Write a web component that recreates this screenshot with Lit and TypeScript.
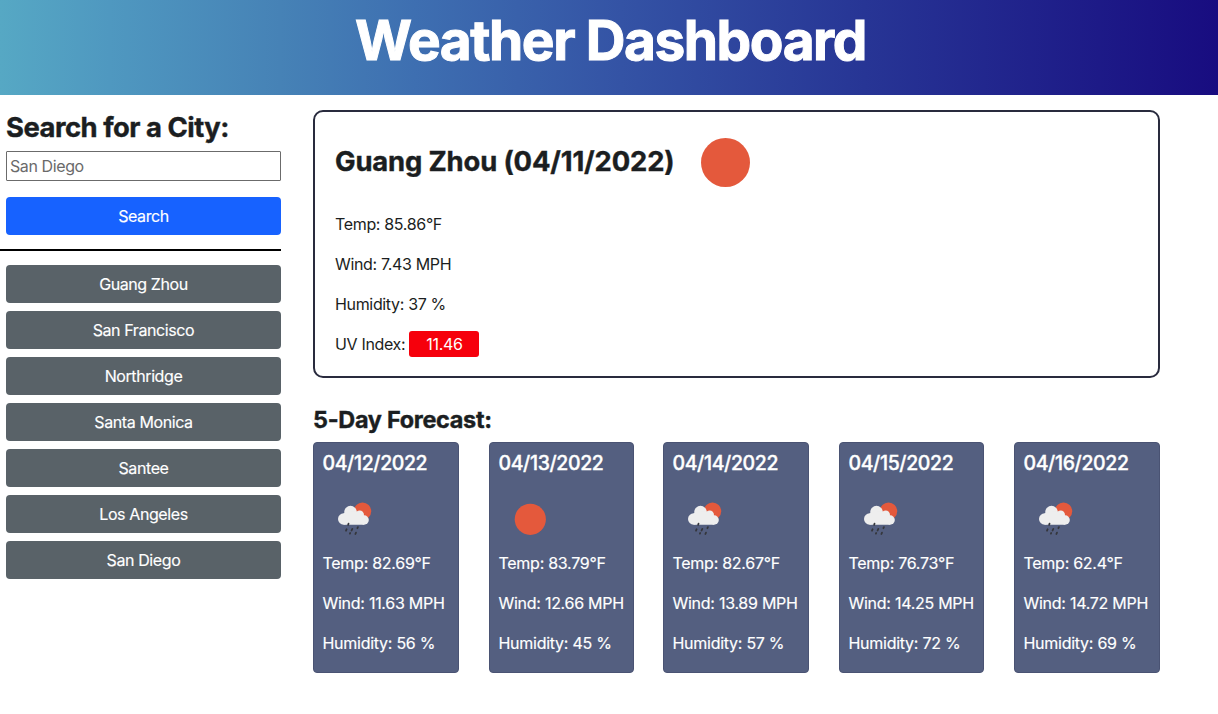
import { LitElement, html, css, svg } from "lit";
import { customElement } from "lit/decorators.js";

type Sky = "clear" | "rain";
interface Day { date: string; sky: Sky; temp: string; wind: string; humidity: string; }

const CITIES = ["Guang Zhou", "San Francisco", "Northridge", "Santa Monica", "Santee", "Los Angeles", "San Diego"];

const DAYS: Day[] = [
  { date: "04/12/2022", sky: "rain", temp: "82.69", wind: "11.63", humidity: "56" },
  { date: "04/13/2022", sky: "clear", temp: "83.79", wind: "12.66", humidity: "45" },
  { date: "04/14/2022", sky: "rain", temp: "82.67", wind: "13.89", humidity: "57" },
  { date: "04/15/2022", sky: "rain", temp: "76.73", wind: "14.25", humidity: "72" },
  { date: "04/16/2022", sky: "rain", temp: "62.4", wind: "14.72", humidity: "69" },
];

const clearSky = svg`<circle cx="31.3" cy="33.3" r="15.6" fill="#e4593c"/>`;
const rainSky = svg`
  <circle cx="39.5" cy="25.2" r="8.7" fill="#e4593c"/>
  <g fill="#eeeeee">
    <circle cx="20.7" cy="33" r="5.7"/>
    <circle cx="27.5" cy="26.1" r="6.3"/>
    <circle cx="36.7" cy="28.9" r="4.3"/>
    <circle cx="41.1" cy="34" r="4.7"/>
    <path d="M20.7 27.3 L28 25 L37 26 L41 30 L41.1 38.7 L20.7 38.7 Z"/>
  </g>
  <g stroke="#35373c" stroke-width="1.8" stroke-linecap="round">
    <path d="M25.5 37.6 L25.2 38.9 M23.6 43.3 L23 44.7 M29.3 42.9 L28.6 44.5 M34.9 41.1 L34.4 42.2 M27.2 47 L26.9 47.6 M33 46.6 L32.4 48"/>
  </g>`;

@customElement("app-root")
export class AppRoot extends LitElement {
  static styles = css`
    :host {
      display: block;
      min-height: 714px;
      background: #fff;
      color: #1b1e21;
      font-family: Inter, "Liberation Sans", sans-serif;
      font-size: 16px;
      line-height: 24px;
      letter-spacing: -0.4px;
    }
    * { box-sizing: border-box; }
    h1, h2, h3, h4, p { margin: 0; padding: 0; }
    .banner {
      height: 95px;
      padding-top: 7px;
      background: linear-gradient(to right, #56a8c4, #4f98c0 9%, #4682b6 23%, #3e6fb1 34%, #3453a5 51%, #273595 71%, #180c80);
      color: #fff;
      text-align: center;
    }
    .title { font-size: 55px; line-height: 67px; font-weight: 700; letter-spacing: -1.45px; padding-left: 3px; -webkit-text-stroke: 1px; }
    .layout { display: flex; align-items: flex-start; }
    .side { width: 281px; padding-top: 15px; }
    .search { display: flex; flex-direction: column; padding: 0 0 14px 6px; border-bottom: 2px solid #000; }
    .search-title { font-size: 27.4px; line-height: 34px; font-weight: 700; letter-spacing: -0.48px; margin-bottom: 7px; white-space: nowrap; -webkit-text-stroke: 0.4px; }
    .field {
      height: 30px; padding: 1px 3px; border: 1px solid #6b6b6b; border-radius: 1px;
      font: inherit; letter-spacing: inherit; background: #fff;
    }
    .field::placeholder { color: #6a6a6a; opacity: 1; }
    .btn {
      height: 38px; border: 0; border-radius: 4px; padding: 0; color: #fff;
      font: inherit; letter-spacing: inherit; -webkit-text-stroke: 0.15px;
    }
    .primary { background: #1762ff; margin-top: 16px; }
    .cities { display: flex; flex-direction: column; gap: 8px; padding: 14px 0 0 6px; }
    .city { background: #596268; }
    .main { width: 847px; margin: 15px 0 0 32px; }
    .today { height: 268px; border: 2px solid #292b3e; border-radius: 10px; padding: 0 20px; }
    .today .stat { letter-spacing: -0.34px; }
    .today-head { display: flex; align-items: center; height: 100px; }
    .today-title { font-size: 27.4px; font-weight: 700; letter-spacing: -0.14px; line-height: 34px; white-space: nowrap; padding-bottom: 2px; width: 339px; -webkit-text-stroke: 0.4px; }
    .sun { width: 49px; height: 49px; margin-left: 27px; }
    .stat { margin-bottom: 16px; white-space: nowrap; }
    .uv { display: inline-block; vertical-align: top; margin-top: -1px; width: 70px; height: 26px; line-height: 26px; border-radius: 3px; background: #f6000c; color: #fff; text-align: center; }
    .forecast-title { font-size: 23.4px; line-height: 29px; font-weight: 700; letter-spacing: -0.28px; margin: 27px 0 8px; -webkit-text-stroke: 0.4px; }
    .days { display: grid; grid-template-columns: 176px 174px 176px 175px 146px; }
    .day { width: 146px; height: 231px; border: 1px solid #4a5373; border-radius: 4px; background: #545f80; color: #fff; padding: 8px 8.5px; letter-spacing: -0.27px; -webkit-text-stroke: 0.15px; }
    .day:nth-child(even) { width: 145px; }
    .date { font-size: 19.5px; line-height: 24px; font-weight: 500; letter-spacing: -0.38px; -webkit-text-stroke: 0.35px; }
    .sky { display: block; width: 64px; height: 64px; margin: 11px 0 1px; }
  `;

  private stats(temp: string, wind: string, humidity: string) {
    return html`
      <p class="stat">Temp: ${temp}°F</p>
      <p class="stat">Wind: ${wind} MPH</p>
      <p class="stat">Humidity: ${humidity} %</p>`;
  }

  render() {
    return html`
      <header class="banner"><h1 class="title">Weather Dashboard</h1></header>
      <div class="layout">
        <aside class="side">
          <div class="search">
            <h2 class="search-title">Search for a City:</h2>
            <input class="field" placeholder="San Diego" />
            <button class="btn primary">Search</button>
          </div>
          <div class="cities">${CITIES.map((c) => html`<button class="btn city">${c}</button>`)}</div>
        </aside>
        <main class="main">
          <section class="today">
            <div class="today-head">
              <h2 class="today-title">Guang Zhou (04/11/2022)</h2>
              <svg class="sun" viewBox="0 0 49 49"><circle cx="24.5" cy="24.5" r="24.5" fill="#e4593c"/></svg>
            </div>
            ${this.stats("85.86", "7.43", "37")}
            <p class="stat">UV Index: <span class="uv">11.46</span></p>
          </section>
          <h3 class="forecast-title">5-Day Forecast:</h3>
          <div class="days">
            ${DAYS.map((d) => html`
              <article class="day">
                <h4 class="date">${d.date}</h4>
                <svg class="sky" viewBox="0 0 64 64">${d.sky === "rain" ? rainSky : clearSky}</svg>
                ${this.stats(d.temp, d.wind, d.humidity)}
              </article>`)}
          </div>
        </main>
      </div>`;
  }
}
